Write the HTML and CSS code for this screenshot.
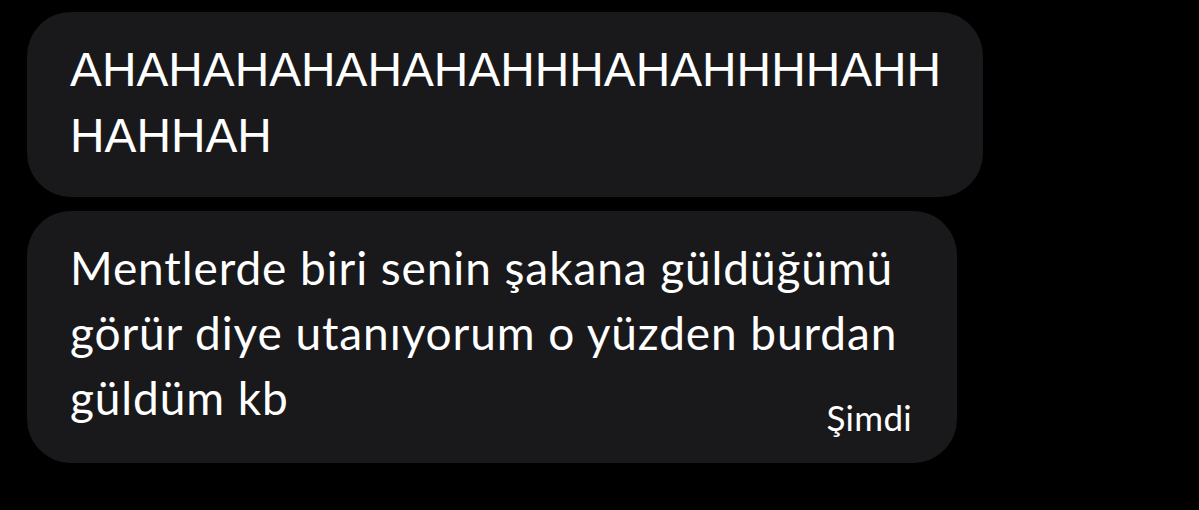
FILE: index.html
```html
<!DOCTYPE html>
<html lang="tr">
<head>
<meta charset="utf-8">
<link rel="stylesheet" href="styles.css">
</head>
<body>
<div class="thread">
  <div class="bubble bubble-first">
    <p class="msg-caps">AHAHAHAHAHAHAHHHAHAHHHHAHH<br>HAHHAH</p>
  </div>
  <div class="bubble bubble-second">
    <p class="msg">Mentlerde biri senin şakana güldüğümü<br>görür diye utanıyorum o yüzden burdan<br>güldüm kb<span class="time">Şimdi</span></p>
  </div>
</div>
</body>
</html>
```
FILE: styles.css
```css
html, body {
  margin: 0;
  padding: 0;
  background: #000;
}
body {
  width: 1199px;
  height: 510px;
  overflow: hidden;
}
.thread {
  display: flex;
  flex-direction: column;
  align-items: flex-start;
  gap: 14px;
  padding: 12px 0 0 27px;
}
.bubble {
  background: #19191b;
  border-radius: 44px;
  box-sizing: border-box;
  color: #fff;
}
.bubble-first {
  width: 956px;
  height: 185px;
  padding: 25px 43px 0 43px;
}
.bubble-second {
  width: 930px;
  height: 252px;
  padding: 24px 45px 0 43px;
}
.msg-caps {
  margin: 0;
  font-family: "Liberation Sans", Arial, sans-serif;
  font-size: 47.8px;
  line-height: 66px;
  white-space: nowrap;
}
.msg {
  margin: 0;
  display: flow-root;
  font-family: Lato, sans-serif;
  font-size: 46px;
  letter-spacing: 0.9px;
  line-height: 65px;
  white-space: nowrap;
}
.time {
  float: right;
  margin-top: 32px;
  font-size: 35px;
  letter-spacing: 0.3px;
  line-height: 40px;
}
```
